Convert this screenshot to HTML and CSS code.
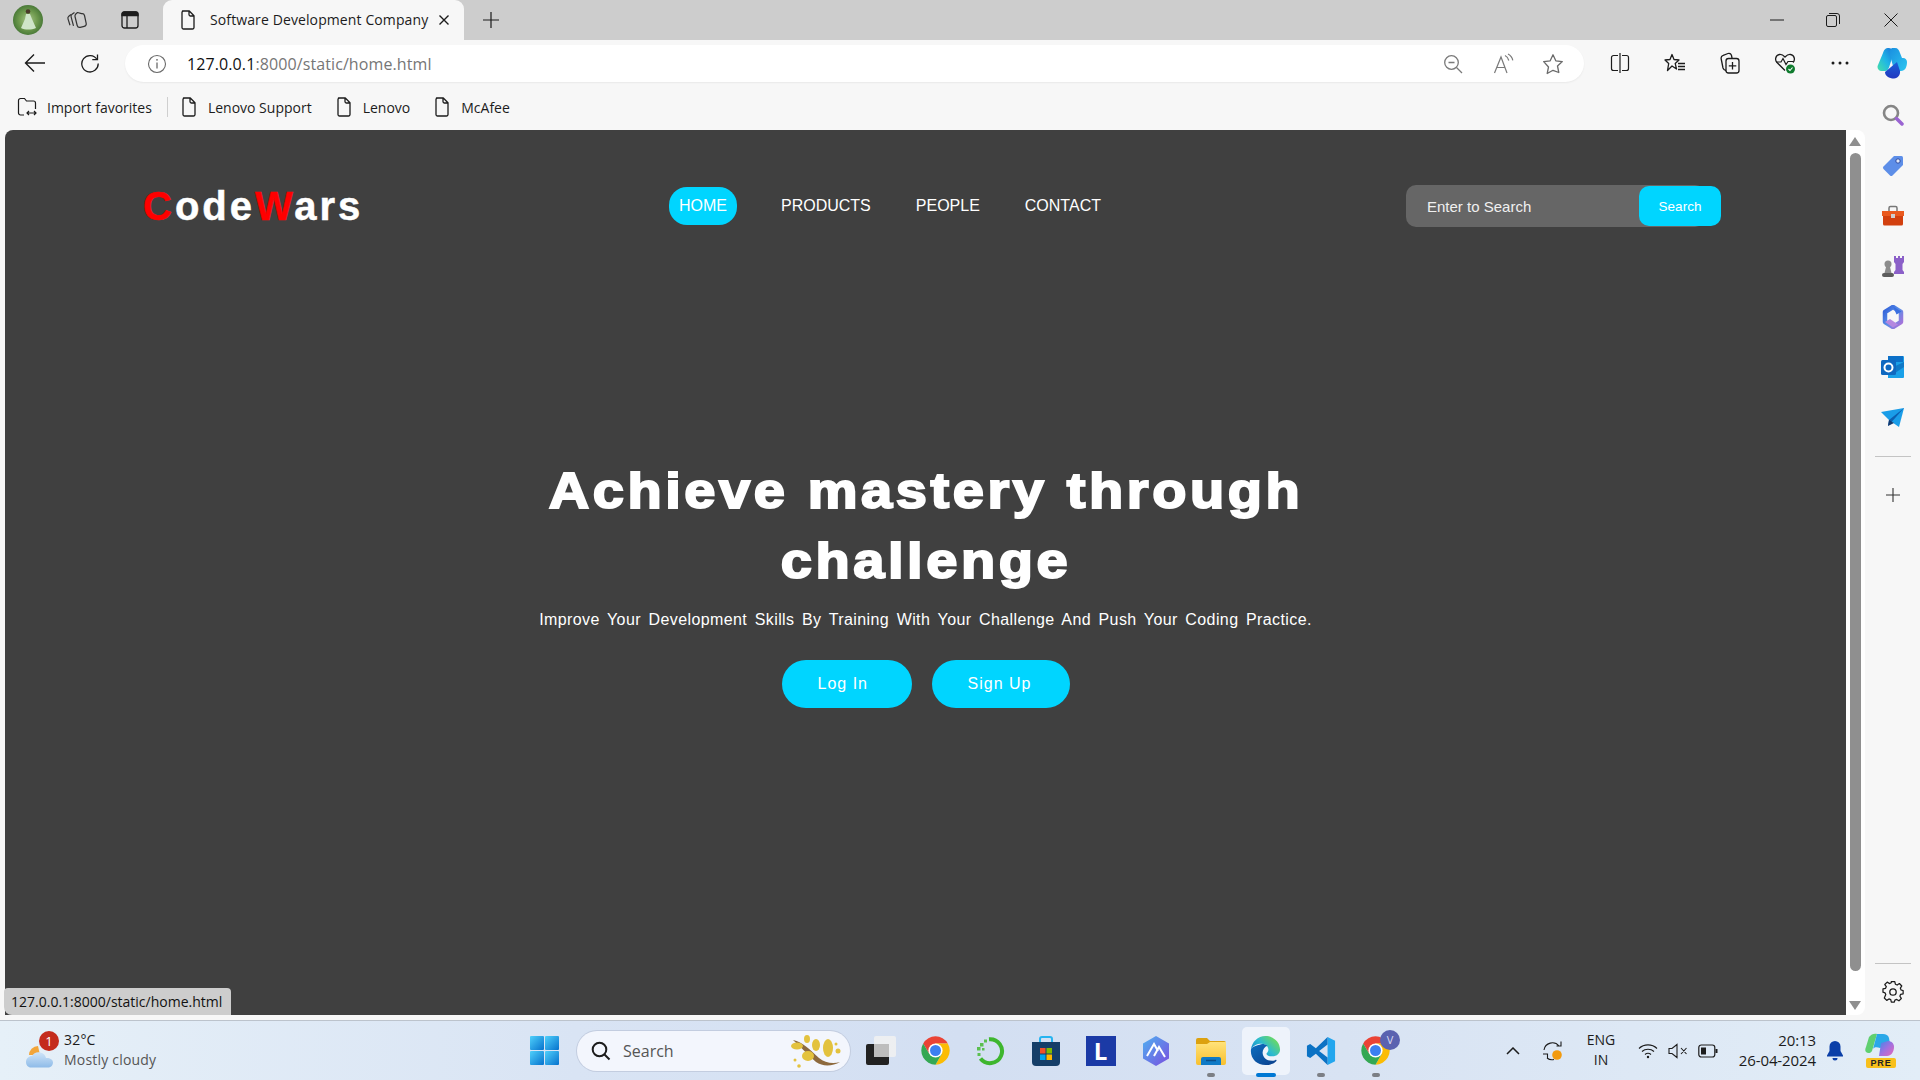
FILE: index.html
```html
<!DOCTYPE html>
<html lang="en">
<head>
<meta charset="utf-8">
<title>Software Development Company</title>
<link rel="stylesheet" href="styles.css">
</head>
<body>
<svg class="defs" aria-hidden="true">
  <defs>
    <symbol id="doc" viewBox="0 0 16 20"><path d="M2.5 1h6.8L14 5.7V17.5a1.5 1.5 0 0 1-1.5 1.5h-9A1.5 1.5 0 0 1 2 17.5V2.5A1.5 1.5 0 0 1 3.500 1zM9 1v3.500A1.500 1.500 0 0 0 10.500 6H14" fill="none" stroke="#1c1c1c" stroke-width="1.300" stroke-linejoin="round"/></symbol>
    <symbol id="chrome" viewBox="0 0 48 48">
      <path d="M43.050 13A22 22 0 0 0 4.950 13L14.470 29.500 24 13z" fill="#ea4335"/>
      <path d="M43.050 13A22 22 0 0 0 4.950 13L14.470 29.500 24 13z" fill="#fbbc04" transform="rotate(120 24 24)"/>
      <path d="M43.050 13A22 22 0 0 0 4.950 13L14.470 29.500 24 13z" fill="#34a853" transform="rotate(240 24 24)"/>
      <circle cx="24" cy="24" r="11" fill="#fff"/><circle cx="24" cy="24" r="8.500" fill="#3b7ff0"/>
    </symbol>
    <linearGradient id="win" x1="0" y1="0" x2="1" y2="1"><stop offset="0" stop-color="#4fd0fb"/><stop offset="1" stop-color="#0672cd"/></linearGradient>
    <linearGradient id="edgeTop" x1="0" y1="1" x2="1" y2="0.300"><stop offset="0" stop-color="#0c78c8"/><stop offset=".55" stop-color="#2dbbd0"/><stop offset="1" stop-color="#6fdc58"/></linearGradient>
    <linearGradient id="edgeBot" x1="0" y1="0" x2="1" y2="1"><stop offset="0" stop-color="#0d6fc0"/><stop offset="1" stop-color="#0b3f8c"/></linearGradient>
    <linearGradient id="copi" x1="0" y1="1" x2="1" y2="0"><stop offset="0" stop-color="#46e0a8"/><stop offset=".5" stop-color="#1fb5e6"/><stop offset="1" stop-color="#1a72d8"/></linearGradient>
    <linearGradient id="copi2" x1="0" y1="0" x2="1" y2="1"><stop offset="0" stop-color="#1a8fe0"/><stop offset="1" stop-color="#2cc6f0"/></linearGradient>
    <linearGradient id="copi3" x1="0" y1="0" x2="0" y2="1"><stop offset="0" stop-color="#1a5fd8"/><stop offset="1" stop-color="#2238c0"/></linearGradient>
    <linearGradient id="m365" x1="0" y1="0" x2="1" y2="1"><stop offset="0" stop-color="#2f5fd8"/><stop offset=".5" stop-color="#5a8ee8"/><stop offset="1" stop-color="#b070d8"/></linearGradient>
    <linearGradient id="hexa" x1="0" y1="0" x2="1" y2="1"><stop offset="0" stop-color="#4fb0f0"/><stop offset="1" stop-color="#7a4fe0"/></linearGradient>
    <linearGradient id="folder" x1="0" y1="0" x2="0" y2="1"><stop offset="0" stop-color="#ffe27a"/><stop offset="1" stop-color="#f8c02e"/></linearGradient>
    <linearGradient id="pre" x1="0" y1="0" x2="1" y2="1"><stop offset="0" stop-color="#3b8ae8"/><stop offset=".5" stop-color="#a070e0"/><stop offset="1" stop-color="#e868b8"/></linearGradient>
    <radialGradient id="grass"><stop offset="0" stop-color="#a8c68a"/><stop offset=".6" stop-color="#6f9a4e"/><stop offset="1" stop-color="#4a7a38"/></radialGradient>
    <linearGradient id="cloud" x1="0" y1="0" x2="0" y2="1"><stop offset="0" stop-color="#cfe4f8"/><stop offset="1" stop-color="#8ebbe8"/></linearGradient>
  </defs>
</svg>

<div class="tabstrip">
  <span class="cell avatar-cell"><svg width="30" height="30" viewBox="0 0 30 30"><circle cx="15" cy="15" r="15" fill="url(#grass)"/><path d="M13 9h4l2 5 4 9c-5 2-11 2-15 0l4-9z" fill="#cfe5c8"/><circle cx="15" cy="6.500" r="2.300" fill="#4b3a2a"/></svg></span>
  <span class="cell cell-collect"><svg width="22" height="22" viewBox="0 0 22 22" fill="none" stroke="#333" stroke-width="1.200" stroke-linejoin="round"><path d="M5 5.500 2.800 7.200c-1 .8-1.100 1.600-.8 2.600l2 6.500"/><path d="M8.500 3.500 6 5.200c-1 .7-1.200 1.500-.9 2.600l2.400 9"/><path d="M11.500 3.500 9.800 5c-.8.800-1 1.500-.8 2.500l2.200 9c.4 1.600 1.500 2.200 3 1.900l4-1c1.500-.4 2.300-1.500 2-3L18.500 6.500C18.100 5 17 4.500 15.600 4.700z"/></svg></span>
  <span class="cell cell-vtab"><svg width="20" height="20" viewBox="0 0 20 20" fill="none" stroke="#1c1c1c" stroke-width="1.300"><rect x="2" y="2" width="16" height="16" rx="2.500"/><path d="M2 5.500h16v-1a2.500 2.500 0 0 0-2.500-2.500h-11A2.500 2.500 0 0 0 2 4.500z" fill="#1c1c1c"/><path d="M7 5v13"/></svg></span>
  <div class="tab">
    <svg class="doc" width="16" height="20"><use href="#doc"/></svg>
    <span class="tab-title">Software Development Company</span>
    <svg class="tab-x" width="12" height="12" viewBox="0 0 12 12" stroke="#1c1c1c" stroke-width="1.400"><path d="M1.500 1.500l9 9M10.500 1.500l-9 9"/></svg>
  </div>
  <span class="cell cell-new"><svg width="18" height="18" viewBox="0 0 18 18" stroke="#1c1c1c" stroke-width="1.200"><path d="M9 1v16M1 9h16"/></svg></span>
  <div class="winctl">
    <span class="cell cell-win cell-min"><svg width="14" height="14" viewBox="0 0 14 14" stroke="#1c1c1c" stroke-width="1"><path d="M0 7h14"/></svg></span>
    <span class="cell cell-win"><svg width="14" height="14" viewBox="0 0 14 14" fill="none" stroke="#1c1c1c" stroke-width="1"><rect x=".5" y="2.500" width="10" height="11" rx="1.500"/><path d="M3 .5h8a2.500 2.500 0 0 1 2.500 2.500v8"/></svg></span>
    <span class="cell cell-win"><svg width="14" height="14" viewBox="0 0 14 14" stroke="#1c1c1c" stroke-width="1"><path d="M.5.5l13 13M13.500.5l-13 13"/></svg></span>
  </div>
</div>

<div class="toolbar">
  <span class="cell cell-nav"><svg width="22" height="20" viewBox="0 0 22 20" fill="none" stroke="#1c1c1c" stroke-width="1.400"><path d="M21 10H1.500M10 1.500 1.500 10l8.500 8.500"/></svg></span>
  <span class="cell cell-nav"><svg width="20" height="20" viewBox="0 0 20 20" fill="none" stroke="#1c1c1c" stroke-width="1.300"><path d="M17 6.500A8.200 8.200 0 1 0 18.200 10.500"/><path d="M17.500 1.500v5.200h-5.200"/></svg></span>
  <div class="address">
    <span class="cell cell-info"><svg width="20" height="20" viewBox="0 0 20 20" fill="none" stroke="#6a6a6a" stroke-width="1.100"><circle cx="10" cy="10" r="8.500"/><path d="M10 8.500v6" stroke-width="1.300"/><circle cx="10" cy="5.800" r=".9" fill="#6a6a6a" stroke="none"/></svg></span>
    <span class="url"><span class="url-host">127.0.0.1</span>:8000/static/home.html</span>
    <span class="cell cell-addr"><svg width="20" height="20" viewBox="0 0 20 20" fill="none" stroke="#7a7a7a" stroke-width="1.300"><circle cx="8.500" cy="8.500" r="6.800"/><path d="M5.500 8.500h6M13.500 13.500l5.500 5.500"/></svg></span>
    <span class="cell cell-addr"><svg width="22" height="22" viewBox="0 0 22 22" fill="none" stroke="#7a7a7a" stroke-width="1.200"><path d="M2.500 20 9 4l6 16M5 14.500h8"/><path d="M13 2.500c2 1 3.300 2.700 3.800 5M16 1c2.500 1.300 4.200 3.500 4.800 6.300"/></svg></span>
    <span class="cell cell-addr"><svg width="22" height="22" viewBox="0 0 22 22" fill="none" stroke="#6a6a6a" stroke-width="1.300" stroke-linejoin="round"><path d="M11 1.800l2.800 6 6.500.8-4.800 4.400 1.300 6.500L11 17.300l-5.800 3.200 1.300-6.500L1.700 8.600l6.500-.8z"/></svg></span>
  </div>
  <span class="cell cell-tool"><svg width="20" height="20" viewBox="0 0 20 20" fill="none" stroke="#1c1c1c" stroke-width="1.200"><path d="M8 2.500H3.500a2 2 0 0 0-2 2v11a2 2 0 0 0 2 2H8M12 2.500h4.500a2 2 0 0 1 2 2v11a2 2 0 0 1-2 2H12M10 0v20"/></svg></span>
  <span class="cell cell-tool"><svg width="22" height="20" viewBox="0 0 22 20" fill="none" stroke="#1c1c1c" stroke-width="1.300" stroke-linejoin="round"><path d="M8 1.500 10 6.500l5 .5-3.800 3.400L12.500 16 8 13l-4.500 4.500 1.200-7L1 7l5-.5z"/><path d="M14 10.500h7M14 13.500h7M14 16.500h7"/></svg></span>
  <span class="cell cell-tool"><svg width="20" height="22" viewBox="0 0 20 22" fill="none" stroke="#1c1c1c" stroke-width="1.300"><rect x="6" y="6.500" width="13" height="14.500" rx="2.500"/><path d="M12.500 10v7.500M8.800 13.800h7.500"/><path d="M6 18.500c-1.500-.2-2.500-1-3-2.500L1.200 7c-.4-2 .5-3.200 2-3.700L8 1.500c1.500-.5 3 .3 3.500 2l.6 3"/></svg></span>
  <span class="cell cell-tool"><svg width="22" height="22" viewBox="0 0 22 22"><path d="M11 18.500 3 10.500C.5 8 1.500 3 5.500 2.500c2.300-.3 4 1 5.500 2.500 1.500-1.500 3.200-2.800 5.500-2.500 4 .5 5 5.500 2.500 8" fill="none" stroke="#1c1c1c" stroke-width="1.300"/><path d="M2 10h5l2-3.500 3 6 2-3h5" fill="none" stroke="#1c1c1c" stroke-width="1.200"/><circle cx="16.500" cy="17" r="4.500" fill="#0f7b2e"/><path d="M14.500 17l1.500 1.500 2.500-3" fill="none" stroke="#fff" stroke-width="1.100"/></svg></span>
  <span class="cell cell-tool"><svg width="18" height="4" viewBox="0 0 18 4" fill="#1c1c1c"><circle cx="2" cy="2" r="1.500"/><circle cx="9" cy="2" r="1.500"/><circle cx="16" cy="2" r="1.500"/></svg></span>
  <span class="cell cell-copilot"><svg width="30" height="32" viewBox="0 0 30 32"><path d="M12 1C8 1 7 3 6 6L1 18c-1.500 3 .5 6 3.500 6H8c2 0 3-1 4-3.500L16 8c1-3.500-.5-7-4-7z" fill="url(#copi)"/><path d="M15 1h3c3 0 4 2 5 5l2 5h1c2.500 0 4 2 4 4 0 5-2 9-6 9h-4c-2 0-3-1-3.500-3L13 8c-1-3-.5-5.500 2-7z" fill="url(#copi2)"/><path d="M8 25l12-10 3 9c.5 3.500-2 7.500-6 7.500C12 31.500 8 29 8 25z" fill="url(#copi3)"/></svg></span>
</div>

<div class="middle">
  <div class="viewport">
    <div class="bookmarks">
      <span class="bm bm-import">
        <svg width="20" height="20" viewBox="0 0 20 20" fill="none" stroke="#1c1c1c" stroke-width="1.200"><path d="M7 18H3.500A2 2 0 0 1 1.500 16V3.500A2 2 0 0 1 3.500 1.500h4l2 2.500h7a2 2 0 0 1 2 2V12"/><path d="M10 16h9M12 14l-2 2 2 2M17 14l2 2-2 2"/></svg>
        <span>Import favorites</span>
      </span>
      <span class="bm-sep"></span>
      <span class="bm"><svg width="16" height="20"><use href="#doc"/></svg><span>Lenovo Support</span></span>
      <span class="bm"><svg width="16" height="20"><use href="#doc"/></svg><span>Lenovo</span></span>
      <span class="bm"><svg width="16" height="20"><use href="#doc"/></svg><span>McAfee</span></span>
    </div>
    <div class="pagewrap">
      <main class="page">
        <header class="site-head">
          <div class="logo"><span class="red">C</span>ode<span class="red">W</span>ars</div>
          <nav class="site-nav">
            <a class="nav-link active">HOME</a>
            <a class="nav-link">PRODUCTS</a>
            <a class="nav-link">PEOPLE</a>
            <a class="nav-link">CONTACT</a>
          </nav>
          <form class="site-search">
            <input class="search-input" type="text" placeholder="Enter to Search">
            <button class="search-btn" type="button">Search</button>
          </form>
        </header>
        <section class="hero">
          <h1 class="hero-title">Achieve mastery through challenge</h1>
          <p class="hero-sub">Improve Your Development Skills By Training With Your Challenge And Push Your Coding Practice.</p>
          <div class="hero-actions">
            <a class="cta cta-login">Log In</a>
            <a class="cta cta-signup">Sign Up</a>
          </div>
        </section>
        <div class="status">127.0.0.1:8000/static/home.html</div>
      </main>
      <div class="scrollbar">
        <span class="arrow arrow-up"></span>
        <span class="thumb"></span>
        <span class="arrow arrow-down"></span>
      </div>
    </div>
  </div>
  <aside class="sidebar">
    <span class="side-cell"><svg width="22" height="22" viewBox="0 0 22 22" fill="none"><circle cx="9" cy="9" r="7" stroke="#858585" stroke-width="2.600"/><path d="M14.500 14.500l5.500 5.500" stroke="#9a64d2" stroke-width="3.500" stroke-linecap="round"/></svg></span>
    <span class="side-cell"><svg width="22" height="22" viewBox="0 0 22 22"><path d="M12 1h7.500A1.500 1.500 0 0 1 21 2.500V10L10.500 20.500a1.800 1.800 0 0 1-2.500 0L1.500 14a1.800 1.800 0 0 1 0-2.500z" fill="#5d8ee8"/><circle cx="16" cy="6" r="2.200" fill="#dfe8fa" stroke="#2d4aa0"/></svg></span>
    <span class="side-cell"><svg width="24" height="22" viewBox="0 0 24 22"><path d="M8 6V3a1.500 1.500 0 0 1 1.500-1.500h5A1.500 1.500 0 0 1 16 3v3" fill="none" stroke="#777" stroke-width="1.500"/><path d="M1 6h22v5H1z" fill="#ea5a1f"/><path d="M2 11h20v8a1.500 1.500 0 0 1-1.500 1.500h-17A1.500 1.500 0 0 1 2 19z" fill="#d2400f"/><rect x="10" y="9" width="4" height="4" fill="#cfcfcf"/></svg></span>
    <span class="side-cell"><svg width="24" height="24" viewBox="0 0 24 24"><path d="M13 2h2v2h2V2h2v2h2V2h2v6l-1.500 2v6l1.500 2v2h-10v-2l1.500-2v-6L13 8z" fill="#8b60c8"/><circle cx="7" cy="10" r="3.500" fill="#8c8c8c"/><path d="M5 13h4l1.500 6h-7z" fill="#8c8c8c"/><rect x="1" y="19" width="12" height="4" rx="2" fill="#5c5c5c"/></svg></span>
    <span class="side-cell"><svg width="22" height="24" viewBox="0 0 22 24"><path d="M11 2l8 5v10l-8 5-8-5V7z" fill="none" stroke="url(#m365)" stroke-width="4.500" stroke-linejoin="round"/><path d="M11 1.500 19.500 6.500l-5 3z" fill="#3a6fe0"/><path d="M3 17l5-3 8 5.500-5 3z" fill="#b488e0"/></svg></span>
    <span class="side-cell"><svg width="24" height="24" viewBox="0 0 24 24"><path d="M7 1h15a1 1 0 0 1 1 1v20a1 1 0 0 1-1 1H7z" fill="#1aa0e8"/><path d="M7 1h15v6H7z" fill="#0c70c8"/><path d="M8 14l15-7v5l-9 6z" fill="#0a5fb0" opacity=".6"/><rect x="0" y="5" width="15" height="15" rx="1.500" fill="#0f68c0"/><circle cx="7.500" cy="12.500" r="4" fill="none" stroke="#fff" stroke-width="2"/></svg></span>
    <span class="side-cell"><svg width="24" height="22" viewBox="0 0 24 22"><path d="M0 5 23 1 18 20 8 13z" fill="#1a9de8"/><path d="M23 1 8 13l-1 6z" fill="#0c5fb0"/><path d="M7 19l1-6 5 3z" fill="#123a70"/></svg></span>
    <span class="side-div"></span>
    <span class="side-cell side-plus"><svg width="16" height="16" viewBox="0 0 16 16" stroke="#333" stroke-width="1.100"><path d="M8 1v14M1 8h14"/></svg></span>
    <span class="side-div side-div-low"></span>
    <span class="side-cell side-gear"><svg width="22" height="22" viewBox="0 0 22 22" fill="none" stroke="#1c1c1c" stroke-width="1.300" stroke-linejoin="round"><path d="M9.200 1.500h3.600l.6 2.700 1.900.8 2.300-1.500 2.500 2.500-1.500 2.300.8 1.900 2.100.6v3.400l-2.700.6-.7 1.900 1.500 2.300-2.500 2.500-2.300-1.500-1.900.7-.6 2.200H9.200l-.6-2.700-1.900-.7-2.300 1.500-2.500-2.500L3.400 15l-.8-1.900-2.100-.6V9.100l2.700-.6.800-1.900L2.400 4.500l2.500-2.500 2.300 1.500 1.900-.8z" transform="translate(.5 -.8) scale(.96)"/><circle cx="11" cy="11" r="3.200"/></svg></span>
  </aside>
</div>

<footer class="taskbar">
  <div class="weather">
    <span class="weather-icon">
      <svg width="32" height="26" viewBox="0 0 32 26"><path d="M5 12a9 9 0 0 1 9-9l2 9z" fill="#f2a53a"/><path d="M2 19c0-3.500 3-6 6-6 1.500-3 5-4.500 8.500-3.500 3 .8 5 3 5.500 5.500 3-.5 7 1 7 4.500 0 3-2.500 5-5 5H7c-3 0-5-2.500-5-5.500z" fill="url(#cloud)"/></svg>
      <span class="weather-badge">1</span>
    </span>
    <span class="weather-text"><span class="temp">32°C</span><span class="cond">Mostly cloudy</span></span>
  </div>
  <span class="tb-cell"><svg width="29" height="29" viewBox="0 0 29 29" fill="url(#win)"><rect width="14" height="14" rx="1"/><rect x="15" width="14" height="14" rx="1"/><rect y="15" width="14" height="14" rx="1"/><rect x="15" y="15" width="14" height="14" rx="1"/></svg></span>
  <div class="tb-search">
    <svg width="20" height="20" viewBox="0 0 20 20" fill="none" stroke="#1c1c1c" stroke-width="2"><circle cx="8.500" cy="8.500" r="6.800"/><path d="M13.500 13.500l5 5"/></svg>
    <span class="tb-search-text">Search</span>
    <svg class="branch" width="52" height="34" viewBox="0 0 52 34"><path d="M3 6c10 2 17 10 26 18 6 5 14 6 21 4-7 4-17 5-24 0C18 21 10 12 3 6z" fill="#8d6a3e"/><g fill="#e3c23e"><ellipse cx="7" cy="12" rx="6" ry="3.500"/><ellipse cx="17" cy="5" rx="3" ry="4"/><ellipse cx="26" cy="11" rx="4" ry="6"/><ellipse cx="38" cy="14" rx="5" ry="9"/><ellipse cx="18" cy="22" rx="6" ry="5"/><circle cx="48" cy="17" r="2.500"/><circle cx="46" cy="10" r="1.500"/><circle cx="5" cy="26" r="1.500"/><circle cx="9" cy="32" r="1.800"/></g></svg>
  </div>
  <span class="tb-cell"><svg width="30" height="30" viewBox="0 0 30 30"><rect x="0" y="8" width="23" height="21" rx="2" fill="#222"/><rect x="8" y="0" width="22" height="21" rx="2" fill="#f1f1f1" opacity=".85"/><rect x="8" y="8" width="15" height="13" fill="#bdbdbd"/></svg></span>
  <span class="tb-cell"><svg width="31" height="31"><use href="#chrome"/></svg></span>
  <span class="tb-cell"><svg width="30" height="30" viewBox="0 0 30 30" fill="none"><path d="M13 3.200a12 12 0 1 1-8.500 19.300" stroke="#3eb62e" stroke-width="4"/><g fill="#5bbf50"><rect x="4" y="7" width="3.500" height="3.500"/><rect x="8" y="3.500" width="3" height="3"/><rect x="1" y="11" width="3.500" height="3.500"/><rect x="6" y="12" width="2.500" height="2.500"/><rect x="1.500" y="17" width="3" height="3"/></g></svg></span>
  <span class="tb-cell"><svg width="30" height="30" viewBox="0 0 30 30"><path d="M9 6V3a2 2 0 0 1 2-2h8a2 2 0 0 1 2 2v3" fill="none" stroke="#27b4f0" stroke-width="2"/><path d="M1 6h28v20a4 4 0 0 1-4 4H5a4 4 0 0 1-4-4z" fill="#153e68"/><rect x="9" y="12" width="5.500" height="5.500" fill="#f0502a"/><rect x="15.500" y="12" width="5.500" height="5.500" fill="#7fba00"/><rect x="9" y="18.500" width="5.500" height="5.500" fill="#00a4ef"/><rect x="15.500" y="18.500" width="5.500" height="5.500" fill="#ffb900"/></svg></span>
  <span class="tb-cell"><span class="app-l">L</span></span>
  <span class="tb-cell"><svg width="30" height="30" viewBox="0 0 30 30"><path d="M15 0l13 7.500v15L15 30 2 22.500v-15z" fill="url(#hexa)"/><path d="M6 20 13 8l4 7M13 20l5-9 6 10" fill="none" stroke="#fff" stroke-width="2"/></svg></span>
  <span class="tb-cell tb-running"><svg width="30" height="28" viewBox="0 0 30 28"><path d="M0 3a2 2 0 0 1 2-2h9l3 3h14a2 2 0 0 1 2 2v4H0z" fill="#dca10f"/><path d="M0 7h11l3-2h16v21a2 2 0 0 1-2 2H2a2 2 0 0 1-2-2z" fill="url(#folder)"/><path d="M5 28v-6a2 2 0 0 1 2-2h16a2 2 0 0 1 2 2v6z" fill="#0f7ac6"/><path d="M10 23.500h10" stroke="#0b4e88" stroke-width="1.500"/></svg></span>
  <span class="tb-cell tb-active"><svg width="31" height="31" viewBox="0 0 32 32"><path d="M1 15C2 7 8 1 16 1c8 0 15 6 15 14 0 4-3 7-8 7-3 0-6-1-6-3 1-1 2-2 2-4 0-3-3-6-7-6-5 0-9 2-11 6z" fill="url(#edgeTop)"/><path d="M1 15c-1 9 6 16 15 16 4 0 8-1 11-4 1-1 0-2-1-1-7 2-13-2-13-8 0-3 2-6 5-7-3-2-6-2-8-1-4 1-8 2-9 5z" fill="url(#edgeBot)"/></svg></span>
  <span class="tb-cell tb-running"><svg width="30" height="30" viewBox="0 0 32 32"><path d="M23 1l8 4v22l-8 4z" fill="#23a6ee"/><path d="M23 1 10.500 13 4.500 8.500 1 10.500v11L4.500 23.500 10.500 19 23 31v-8L14 16l9-7z" fill="#0b72c4"/></svg></span>
  <span class="tb-cell tb-running tb-chrome-v"><svg width="31" height="31"><use href="#chrome"/></svg><span class="profile-v">V</span></span>
  <div class="tray">
    <span class="tray-cell"><svg width="14" height="8" viewBox="0 0 14 8" fill="none" stroke="#1c1c1c" stroke-width="1.500"><path d="M1 7l6-6 6 6"/></svg></span>
    <span class="tray-cell"><svg width="22" height="22" viewBox="0 0 22 22" fill="none" stroke="#1c1c1c" stroke-width="1.100"><path d="M2 10a8.500 8.500 0 0 1 15-4M19 1.500V6h-4.500M1 14h4.500v4M5 18a8 8 0 0 0 7 1.500"/><circle cx="15" cy="15" r="4.800" fill="#f29a0e" stroke="none"/></svg></span>
    <span class="tray-lang"><span>ENG</span><span>IN</span></span>
    <span class="tray-cell tray-sm"><svg width="20" height="16" viewBox="0 0 20 16" fill="none" stroke="#1c1c1c" stroke-width="1.100"><path d="M1 5.500c5-4.800 13-4.800 18 0M4 8.500c3.300-3 8.700-3 12 0M7 11.500c1.700-1.400 4.300-1.400 6 0"/><circle cx="10" cy="14" r="1.200" fill="#1c1c1c" stroke="none"/></svg></span>
    <span class="tray-cell tray-sm"><svg width="20" height="16" viewBox="0 0 20 16" fill="none" stroke="#1c1c1c" stroke-width="1.100"><path d="M1 5.500h3L9 1.500v13L4 10.500H1zM13 5l5.500 6M18.500 5 13 11"/></svg></span>
    <span class="tray-cell tray-sm"><svg width="20" height="14" viewBox="0 0 20 14" fill="none" stroke="#1c1c1c" stroke-width="1.200"><rect x=".8" y="1" width="16" height="12" rx="2.500"/><rect x="3" y="3.500" width="5" height="7" fill="#1c1c1c" stroke="none"/><path d="M18.500 5v4" stroke-width="2"/></svg></span>
    <span class="clock"><span>20:13</span><span>26-04-2024</span></span>
    <span class="tray-cell tray-bell"><svg width="16" height="20" viewBox="0 0 16 20"><path d="M8 0a5.500 5.500 0 0 1 5.500 5.500V10L16 14.500v1H0v-1L2.500 10V5.500A5.500 5.500 0 0 1 8 0z" fill="#0b3fa8"/><path d="M5.500 17h5a2.500 2.500 0 0 1-5 0z" fill="#0b3fa8"/></svg></span>
    <span class="tray-copilot">
      <svg width="30" height="28" viewBox="0 0 30 28"><path d="M4 4c2-3 6-4 8-3L7 18c-1 2-4 3-6 1-1-1-1-3 0-5z" fill="#5fd070"/><path d="M12 1h6c3 0 5 1 6 4l1 6-10 4c-3-1-6-1-7 1z" fill="#2aa8e8"/><path d="M16 10l7-2c3 0 6 2 6 6 0 5-3 9-7 9h-8z" fill="url(#pre)"/></svg>
      <span class="pre-tag">PRE</span>
    </span>
  </div>
</footer>
</body>
</html>
```

FILE: styles.css
```css
* { box-sizing: border-box; }
html, body { margin: 0; padding: 0; }
body {
  width: 1920px;
  height: 1080px;
  overflow: hidden;
  display: flex;
  flex-direction: column;
  font-family: "Open Sans", "Noto Sans", sans-serif;
  background: #f7f7f7;
  color: #1c1c1c;
}
.defs { width: 0; height: 0; display: block; flex: none; }
.cell { display: flex; align-items: center; justify-content: center; flex: none; height: 100%; }

/* Tab strip */
.tabstrip { height: 40px; flex: none; display: flex; background: #cdcdcd; }
.avatar-cell { width: 40px; margin-left: 8px; }
.cell-collect { width: 58px; }
.cell-vtab { width: 48px; margin-right: 9px; }
.tab {
  width: 301px;
  height: 40px;
  background: #f7f7f7;
  border-radius: 9px 9px 0 0;
  display: flex;
  align-items: center;
  padding-left: 17px;
  flex: none;
}
.tab-title { margin-left: 14px; margin-top: -2px; font-size: 14px; width: 218px; white-space: nowrap; letter-spacing: .11px; }
.tab-x { margin-left: 10px; }
.cell-new { width: 54px; }
.winctl { margin-left: auto; display: flex; height: 100%; }
.cell-win { width: 58px; }
.cell-min { padding-left: 4px; }

/* Toolbar */
.toolbar { height: 50px; flex: none; display: flex; align-items: flex-start; padding: 0 0 0 7px; background: #f7f7f7; }
.toolbar .cell { height: 46px; }
.cell-nav { width: 55px; }
.address {
  width: 1459px;
  height: 37px;
  margin: 5px 8px 0 8px;
  flex: none;
  background: #fff;
  border-radius: 19px;
  display: flex;
  align-items: center;
  box-shadow: 0 1px 2px rgba(0,0,0,.06);
  padding-right: 6px;
}
.toolbar .address .cell { height: 37px; }
.cell-info { width: 44px; margin-left: 10px; }
.url { flex: 1; font-size: 16px; color: #767676; margin-left: 8px; letter-spacing: .1px; white-space: nowrap; }
.url-host { color: #111; }
.cell-addr { width: 50px; }
.cell-tool { width: 55px; }
.cell-copilot { width: 50px; }
.cell-copilot svg { display: block; }

/* Middle */
.middle { flex: 1; display: flex; min-height: 0; }
.viewport { width: 1866px; flex: none; display: flex; flex-direction: column; }
.bookmarks { height: 40px; flex: none; display: flex; align-items: flex-start; padding: 7px 0 0 17px; gap: 24px; font-size: 14px; }
.bm { display: flex; align-items: center; gap: 11px; height: 20px; white-space: nowrap; }
.bm-import { gap: 10px; margin-right: -9px; }
.bm-sep { width: 1px; height: 20px; background: #cfcfcf; margin-right: -11px; }
.pagewrap { flex: none; height: 885px; display: flex; padding-left: 5px; }

/* Page */
.page {
  position: relative;
  width: 1841px;
  height: 885px;
  flex: none;
  background: #404040;
  border-radius: 8px 0 0 0;
  color: #fff;
  font-family: "Liberation Sans", Arial, sans-serif;
}
.site-head { display: flex; align-items: center; height: 42px; padding: 0 125px 0 138px; position: relative; top: 55px; }
.logo { font-size: 40px; font-weight: 700; letter-spacing: 3px; -webkit-text-stroke: .5px currentColor; white-space: nowrap; width: 218px; flex: none; }
.red { color: #f00; }
.site-nav { margin-left: 308px; display: flex; align-items: center; gap: 45px; }
.nav-link { font-size: 16px; line-height: 18px; color: #fff; }
.nav-link.active { background: #00d5ff; padding: 10px; border-radius: 18px; margin-right: -1px; }
.site-search { margin-left: auto; display: flex; align-items: center; }
.search-input {
  width: 299px;
  height: 42px;
  border: 0;
  border-radius: 10px;
  background: #666;
  color: #f0f0f0;
  padding: 0 0 0 21px;
  font: 15px "Liberation Sans", Arial, sans-serif;
  outline: 0;
}
.search-input::placeholder { color: #f0f0f0; opacity: 1; }
.search-btn {
  width: 82px;
  height: 40px;
  margin-left: -66px;
  border: 0;
  border-radius: 10px;
  background: #00d5ff;
  color: #fff;
  font: 13.500px "Liberation Sans", Arial, sans-serif;
  padding: 0;
  flex: none;
}

/* Hero */
.hero { display: flex; flex-direction: column; align-items: center; }
.hero-title {
  width: 800px;
  margin: 284px 0 0;
  text-align: center;
  font-size: 50px;
  line-height: 70px;
  font-weight: 700;
  letter-spacing: 3.200px;
  -webkit-text-stroke: 2px #fff;
  transform: scaleX(1.12);
  padding: 0 52px;
}
.hero-sub { margin: 15px 0 0; font-size: 16px; line-height: 18px; letter-spacing: .4px; word-spacing: 2.700px; white-space: nowrap; }
.hero-actions { display: flex; gap: 20px; margin-top: 31px; }
.cta {
  height: 48px;
  border-radius: 25px;
  background: #00d5ff;
  color: #fff;
  font-size: 16px;
  line-height: 48px;
  letter-spacing: 1px;
  padding-left: 36px;
}
.cta-login { width: 130px; }
.cta-signup { width: 138px; }
.status {
  position: absolute;
  left: -1px;
  bottom: 0;
  width: 227px;
  height: 27px;
  background: #cdcdcd;
  border-radius: 4px 4px 0 8px;
  color: #111;
  font: 14px/27px "Open Sans", "Noto Sans", sans-serif;
  padding-left: 7px;
  white-space: nowrap;
}

/* Scrollbar */
.scrollbar {
  width: 19px;
  flex: none;
  background: #fff;
  border-radius: 0 8px 8px 0;
  display: flex;
  flex-direction: column;
  align-items: center;
  padding: 7px 1px 5px 0;
}
.arrow { width: 0; height: 0; border-left: 6px solid transparent; border-right: 6px solid transparent; flex: none; }
.arrow-up { border-bottom: 9px solid #8f8f8f; }
.arrow-down { border-top: 9px solid #8f8f8f; }
.thumb { width: 11px; flex: 1; background: #8f8f8f; border-radius: 6px; margin: 7px 0 30px; }

/* Sidebar */
.sidebar { width: 54px; flex: none; display: flex; flex-direction: column; align-items: center; }
.side-cell { height: 50.400px; width: 100%; flex: none; display: flex; align-items: center; justify-content: center; }
.side-div { width: 36px; height: 1px; background: #c4c4c4; flex: none; margin-top: 13px; }
.side-plus { margin-top: 13px; }
.side-div-low { margin-top: auto; }
.side-gear { margin: 3px 0 3px; }

/* Taskbar */
.taskbar {
  height: 60px;
  flex: none;
  display: flex;
  align-items: center;
  border-top: 1px solid #bcc3cc;
  background: linear-gradient(90deg, #e6f0f8 0%, #d9e4f4 30%, #d3dff2 50%, #d8e3f3 70%, #e2edf7 100%);
}
.weather { width: 517px; flex: none; display: flex; align-items: center; padding-left: 24px; height: 100%; }
.weather-icon { position: relative; width: 40px; height: 36px; flex: none; display: flex; align-items: flex-end; }
.weather-badge {
  position: absolute;
  left: 15px;
  top: -2px;
  width: 20px;
  height: 20px;
  border-radius: 50%;
  background: #c42b1c;
  color: #fff;
  font-size: 13px;
  line-height: 20px;
  text-align: center;
}
.weather-text { display: flex; flex-direction: column; font-size: 14px; line-height: 20px; margin-top: -2px; letter-spacing: .2px; }
.cond { color: #555; }
.tb-cell { width: 55px; height: 100%; flex: none; display: flex; align-items: center; justify-content: center; position: relative; }
.tb-search {
  width: 273px;
  height: 40px;
  margin: 0 3px 0 5px;
  flex: none;
  border-radius: 20px;
  background: #f3f6fd;
  box-shadow: 0 0 0 1px #c3cde0;
  display: flex;
  align-items: center;
  padding-left: 14px;
}
.tb-search-text { margin-left: 12px; font-size: 16px; color: #555; }
.branch { margin-left: auto; margin-right: 8px; }
.app-l {
  width: 30px;
  height: 30px;
  background: #1b3aa6;
  color: #fff;
  font: 700 24px/30px "Open Sans", sans-serif;
  text-align: center;
  display: block;
}
.tb-running::after {
  content: "";
  position: absolute;
  left: 50%;
  bottom: 3px;
  width: 8px;
  height: 4px;
  margin-left: -4px;
  border-radius: 2px;
  background: #7c7f85;
}
.tb-active::before {
  content: "";
  position: absolute;
  left: 3.500px;
  top: 6px;
  width: 48px;
  height: 48px;
  border-radius: 5px;
  background: #eef3fb;
}
.tb-active svg { position: relative; }
.tb-active::after {
  content: "";
  position: absolute;
  left: 50%;
  bottom: 3px;
  width: 20px;
  height: 4px;
  margin-left: -10px;
  border-radius: 2px;
  background: #0078d4;
}
.profile-v {
  position: absolute;
  left: 32px;
  top: 9px;
  width: 20px;
  height: 20px;
  border-radius: 50%;
  background: #5a62b0;
  color: #d8daf0;
  font-size: 11px;
  line-height: 20px;
  text-align: center;
}
.tray { margin-left: auto; display: flex; align-items: center; height: 100%; padding-right: 18px; }
.tray-cell { width: 40px; display: flex; align-items: center; justify-content: center; flex: none; }
.tray-sm { width: 30px; }
.tray-lang { width: 56px; margin-right: 4px; display: flex; flex-direction: column; align-items: center; font-size: 14px; line-height: 20px; margin-top: -2px; }
.clock { width: 90px; margin: -2px 4px 0 3px; display: flex; flex-direction: column; align-items: flex-end; font-size: 15px; line-height: 20px; white-space: nowrap; letter-spacing: -.1px; }
.tray-bell { width: 30px; margin-right: 8px; }
.tray-copilot { width: 44px; height: 36px; position: relative; display: flex; justify-content: center; }
.pre-tag {
  position: absolute;
  left: 8px;
  top: 25px;
  width: 30px;
  height: 10px;
  background: #f8c01c;
  border-radius: 2px;
  color: #222;
  font: 700 9px/10px "Liberation Sans", sans-serif;
  text-align: center;
  letter-spacing: .8px;
}
```
